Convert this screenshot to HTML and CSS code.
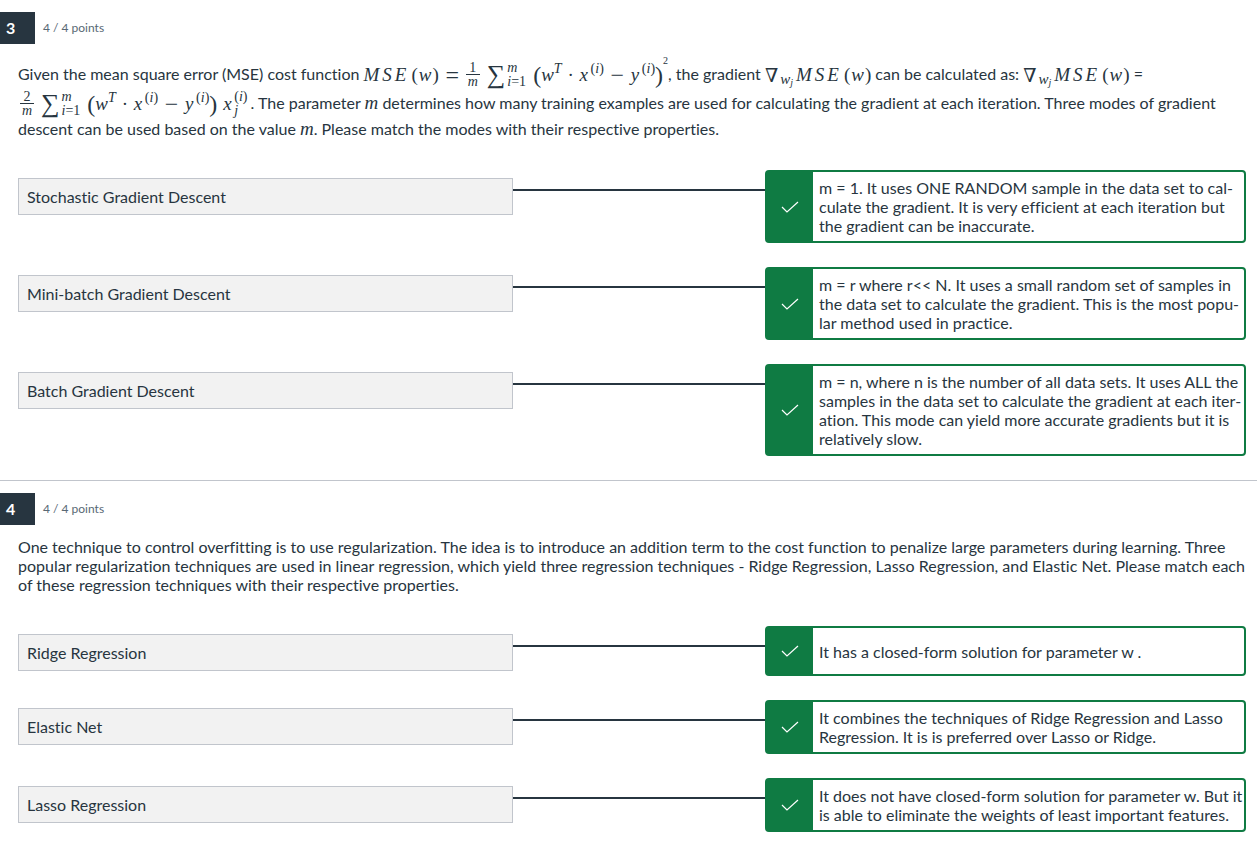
FILE: index.html
```html
<!DOCTYPE html>
<html lang="en">
<head>
<meta charset="utf-8">
<title>Quiz results</title>
<link rel="stylesheet" href="styles.css">
</head>
<body>
<main>
<section class="question">
  <header class="question-head"><h2 class="number">3</h2><span class="points">4 / 4 points</span></header>
  <div class="question-body">
    <p class="prompt prompt-math">Given the mean square error (MSE) cost function
      <span class="math"><i>M</i><i>S</i><i>E</i><span class="term call"><b>(</b><i>w</i><b>)</b></span><b class="rel">=</b><span class="frac"><span>1</span><i>m</i></span><span class="term sum"><b class="sigma">∑</b><span class="limits"><i>m</i><span><i>i</i>=1</span></span></span><span class="term group"><b class="big">(</b><i>w</i><i class="sup">T</i></span><b class="dot">·</b><span class="term"><i class="wide">x</i><span class="sup">(<i>i</i>)</span></span><b class="rel">−</b><span class="term"><i class="wide">y</i><span class="sup">(<i>i</i>)</span><b class="big">)</b><span class="power">2</span></span></span>, the gradient
      <span class="math"><span class="term"><b class="nabla">∇</b><span class="sub"><i>w</i><i class="subsub">j</i></span></span><i>M</i><i>S</i><i>E</i><span class="term call"><b>(</b><i>w</i><b>)</b></span></span> can be calculated as:
      <span class="math"><span class="term"><b class="nabla">∇</b><span class="sub"><i>w</i><i class="subsub">j</i></span></span><i>M</i><i>S</i><i>E</i><span class="term call"><b>(</b><i>w</i><b>)</b></span></span> =
      <span class="math lead"><span class="frac"><span>2</span><i>m</i></span><span class="term sum"><b class="sigma">∑</b><span class="limits"><i>m</i><span><i>i</i>=1</span></span></span><span class="term group"><b class="big">(</b><i>w</i><i class="sup">T</i></span><b class="dot">·</b><span class="term"><i class="wide">x</i><span class="sup">(<i>i</i>)</span></span><b class="rel">−</b><span class="term"><i class="wide">y</i><span class="sup">(<i>i</i>)</span><b class="big">)</b></span><span class="term last"><i class="wide">x</i><span class="both"><span>(<i>i</i>)</span><i>j</i></span></span></span>. The parameter <i class="var">m</i> determines how many training examples are used for calculating the gradient at each iteration. Three modes of gradient descent can be used based on the value <i class="var">m</i>. Please match the modes with their respective properties.</p>
    <div class="matches">
      <div class="match">
        <div class="term-box">Stochastic Gradient Descent</div><div class="line"></div>
        <div class="answer"><span class="mark"><svg viewBox="0 0 18 12" aria-label="Correct"><path d="M1 6l5 5L17 1"/></svg></span><p>m = 1. It uses ONE RANDOM sample in the data set to cal&shy;culate the gradient. It is very efficient at each iteration but the gradient can be inaccurate.</p></div>
      </div>
      <div class="match">
        <div class="term-box">Mini-batch Gradient Descent</div><div class="line"></div>
        <div class="answer"><span class="mark"><svg viewBox="0 0 18 12" aria-label="Correct"><path d="M1 6l5 5L17 1"/></svg></span><p>m = r where r&lt;&lt; N. It uses a small random set of samples in the data set to calculate the gradient. This is the most popu&shy;lar method used in practice.</p></div>
      </div>
      <div class="match">
        <div class="term-box">Batch Gradient Descent</div><div class="line"></div>
        <div class="answer"><span class="mark"><svg viewBox="0 0 18 12" aria-label="Correct"><path d="M1 6l5 5L17 1"/></svg></span><p>m = n, where n is the number of all data sets. It uses ALL the samples in the data set to calculate the gradient at each iter&shy;ation. This mode can yield more accurate gradients but it is relatively slow.</p></div>
      </div>
    </div>
  </div>
</section>
<section class="question">
  <header class="question-head"><h2 class="number">4</h2><span class="points">4 / 4 points</span></header>
  <div class="question-body">
    <p class="prompt">One technique to control overfitting is to use regularization. The idea is to introduce an addition term to the cost function to penalize large parameters during learning. Three popular regularization techniques are used in linear regression, which yield three regression techniques - Ridge Regression, Lasso Regression, and Elastic Net. Please match each of these regression techniques with their respective properties.</p>
    <div class="matches">
      <div class="match">
        <div class="term-box">Ridge Regression</div><div class="line"></div>
        <div class="answer"><span class="mark"><svg viewBox="0 0 18 12" aria-label="Correct"><path d="M1 6l5 5L17 1"/></svg></span><p>It has a closed-form solution for parameter w .</p></div>
      </div>
      <div class="match">
        <div class="term-box">Elastic Net</div><div class="line"></div>
        <div class="answer"><span class="mark"><svg viewBox="0 0 18 12" aria-label="Correct"><path d="M1 6l5 5L17 1"/></svg></span><p>It combines the techniques of Ridge Regression and Lasso Regression. It is is preferred over Lasso or Ridge.</p></div>
      </div>
      <div class="match">
        <div class="term-box">Lasso Regression</div><div class="line"></div>
        <div class="answer"><span class="mark"><svg viewBox="0 0 18 12" aria-label="Correct"><path d="M1 6l5 5L17 1"/></svg></span><p>It does not have closed-form solution for parameter w. But it is able to eliminate the weights of least important features.</p></div>
      </div>
    </div>
  </div>
</section>
</main>
</body>
</html>
```
FILE: styles.css
```css
* { box-sizing: border-box; }
body {
  margin: 0;
  background: #fff;
  color: #273540;
  font: 16px/19px Lato, sans-serif;
  font-variant-ligatures: no-common-ligatures;
}
h2, p { margin: 0; }

.question { padding: 12px 0 24px; }
.question:last-child { padding-bottom: 12px; }
.question + .question { border-top: 1px solid #c1c5cc; }
.question-head { display: flex; align-items: center; gap: 8px; }
.number {
  width: 35px;
  padding: 0 6px;
  background: #273540;
  color: #fff;
  font-size: 16px;
  line-height: 32px;
}
.points { color: #586874; font-size: 12px; line-height: 16px; }
.question-body { padding: 12px 11px 0 18px; }
.prompt-math { padding-top: 5px; }

.matches { display: grid; gap: 24px; padding-top: 32px; }
.match {
  display: grid;
  grid-template-columns: minmax(0, 495fr) minmax(0, 252fr) minmax(0, 481fr);
  align-items: start;
}
.term-box {
  margin-top: 8px;
  padding: 8px;
  border: 1px solid #c1c5cc;
  background: #f2f2f2;
}
.line { height: 2px; margin-top: 19px; background: #273540; }
.answer {
  display: flex;
  min-height: 50px;
  border: 2px solid #0f7b43;
  border-radius: 4px;
}
.answer p { align-self: center; padding: 6px 0 6px 6px; }
.mark {
  display: flex;
  flex: none;
  align-items: center;
  justify-content: center;
  width: 46px;
  background: #0f7b43;
}
.mark svg {
  width: 18px;
  height: 12px;
  fill: none;
  stroke: #fff;
  stroke-width: 1.2;
}

/* Formulas */
.math {
  display: inline-flex;
  align-items: center;
  gap: 3px;
  height: 29px;
  padding-bottom: 2px;
  vertical-align: middle;
  font: 19px/20px "Liberation Serif", serif;
}
.math b { font-weight: 400; }
.math .term { display: flex; align-items: center; }
.math .call { gap: 1px; padding-left: 2px; }
.math .rel { width: 21px; font-size: 24px; text-align: center; }
.math .dot { width: 12px; text-align: center; }
.math .wide { width: 11px; }
.math .big { font-size: 24px; }
.math .sigma { padding-right: 2px; font-size: 26px; }
.math .sum { padding: 0 4px; }
.math .nabla { padding-right: 2px; font-family: "DejaVu Serif", serif; font-size: 19px; }
.math .last { padding: 0 3px; }
.lead { padding-left: 2px; }
.frac {
  display: grid;
  justify-items: center;
  width: 14px;
  font-size: 14px;
  line-height: 13px;
}
.frac > :first-child { width: 100%; border-bottom: 1px solid #273540; text-align: center; }
.limits { display: grid; font-size: 14px; line-height: 14px; }
.sup { margin-bottom: 12px; font-size: 14px; line-height: 14px; }
.sub { display: flex; margin-top: 12px; font-size: 15px; line-height: 14px; }
.subsub { margin-top: 4px; font-size: 10px; }
.power { margin-bottom: 28px; font-size: 10px; line-height: 10px; }
.both { display: grid; font-size: 14px; line-height: 14px; }
.var { font: 19px/19px "Liberation Serif", serif; font-style: italic; }
```
